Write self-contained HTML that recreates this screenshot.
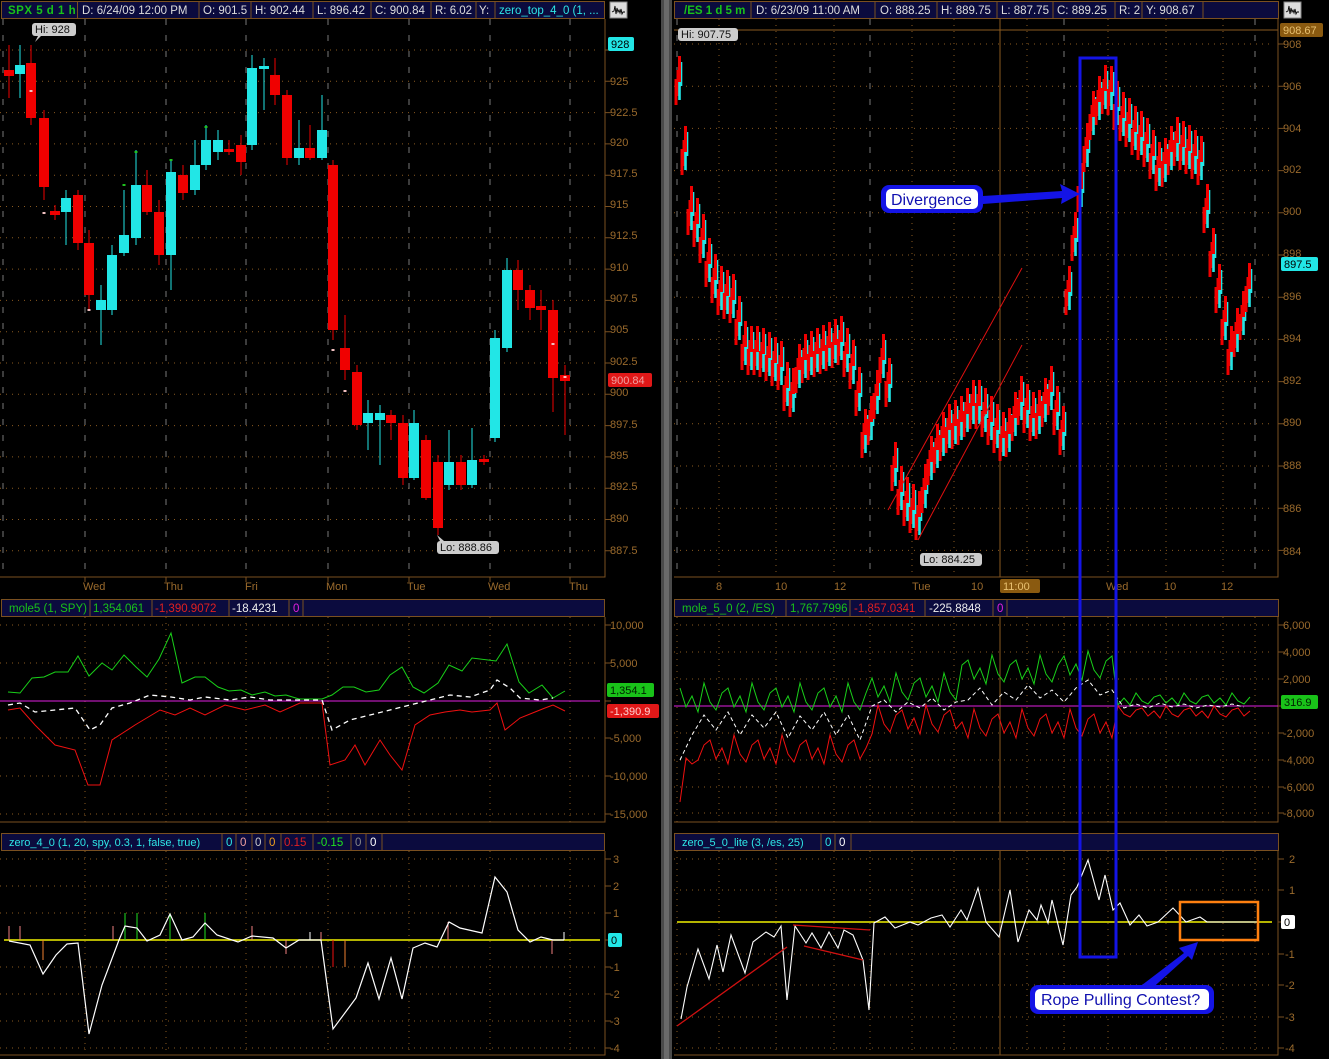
<!DOCTYPE html>
<html><head><meta charset="utf-8">
<style>
html,body{margin:0;padding:0;background:#000;}
svg{display:block;font-family:"Liberation Sans",sans-serif;}
.ax{fill:#9a6a2c;font-size:11px;}
.hd{font-size:11.5px;}
</style></head><body>
<svg width="1329" height="1059" viewBox="0 0 1329 1059" xmlns="http://www.w3.org/2000/svg" xmlns:xlink="http://www.w3.org/1999/xlink">
<rect width="1329" height="1059" fill="#000"/>
<rect x="661" y="0" width="11" height="1059" fill="#4a4a4a"/>
<rect x="664" y="0" width="5" height="1059" fill="#6a6a6a"/>

<!-- GRIDS -->
<g fill="none">
<path stroke="#8a5a20" stroke-dasharray="1,5" d="M0 50H598M0 81.3H598M0 112.6H598M0 143.9H598M0 175.2H598M0 206.5H598M0 237.8H598M0 269.1H598M0 300.4H598M0 331.7H598M0 363H598M0 394.3H598M0 425.6H598M0 456.9H598M0 488.2H598M0 519.5H598M0 550.8H598"/>
<path stroke="#777" stroke-dasharray="6,10" d="M3 19V577M85 19V577M166 19V577M246 19V577M328 19V577M409 19V577M490 19V577M570 19V577"/>
<path stroke="#7a5020" d="M0 577H605V19M85 577v5M166 577v5M246 577v5M328 577v5M409 577v5M490 577v5M570 577v5"/>
<path stroke="#7a5020" d="M605 50h6M605 81.3h6M605 112.6h6M605 143.9h6M605 175.2h6M605 206.5h6M605 237.8h6M605 269.1h6M605 300.4h6M605 331.7h6M605 363h6M605 394.3h6M605 425.6h6M605 456.9h6M605 488.2h6M605 519.5h6M605 550.8h6"/>
<path stroke="#8a5a20" stroke-dasharray="1,5" d="M0 625H598M0 663H598M0 738H598M0 776H598M0 814H598M85 617V822M166 617V822M246 617V822M328 617V822M409 617V822M490 617V822M570 617V822"/>
<path stroke="#7a5020" d="M0 822H605V617M605 625h6M605 663h6M605 701h6M605 738h6M605 776h6M605 814h6"/>
<path stroke="#8a5a20" stroke-dasharray="1,5" d="M0 859H598M0 886H598M0 913H598M0 967H598M0 994H598M0 1021H598M0 1048H598M85 851V1055M166 851V1055M246 851V1055M328 851V1055M409 851V1055M490 851V1055M570 851V1055"/>
<path stroke="#7a5020" d="M0 1055H605V851M605 859h6M605 886h6M605 913h6M605 940h6M605 967h6M605 994h6M605 1021h6M605 1048h6"/>
<path stroke="#8a5a20" stroke-dasharray="1,5" d="M674 44H1272M674 86.2H1272M674 128.4H1272M674 170.6H1272M674 212.8H1272M674 255H1272M674 297.2H1272M674 339.4H1272M674 381.6H1272M674 423.8H1272M674 466H1272M674 508.2H1272M674 550.4H1272M719 19V577M776 19V577M834 19V577M912 19V577M954 19V577M1027 19V577M1108 19V577M1166 19V577M1223 19V577"/>
<path stroke="#777" stroke-dasharray="6,10" d="M677 19V577M870 19V577M1064 19V577M1255 19V577"/>
<path stroke="#8a5a20" d="M1000 19V577M674 30H1278"/>
<path stroke="#7a5020" d="M674 577H1278V19M1278 44h6M1278 86.2h6M1278 128.4h6M1278 170.6h6M1278 212.8h6M1278 255h6M1278 297.2h6M1278 339.4h6M1278 381.6h6M1278 423.8h6M1278 466h6M1278 508.2h6M1278 550.4h6"/>
<path stroke="#8a5a20" stroke-dasharray="1,5" d="M674 625H1272M674 652H1272M674 679H1272M674 733H1272M674 760H1272M674 787H1272M674 813H1272M719 617V822M776 617V822M834 617V822M912 617V822M954 617V822M1027 617V822M1108 617V822M1166 617V822M1223 617V822M677 617V822M870 617V822M1064 617V822M1255 617V822"/>
<path stroke="#8a5a20" d="M1000 617V822"/>
<path stroke="#7a5020" d="M674 822H1278V617M1278 625h6M1278 652h6M1278 679h6M1278 706h6M1278 733h6M1278 760h6M1278 787h6M1278 813h6"/>
<path stroke="#8a5a20" stroke-dasharray="1,5" d="M674 859H1272M674 890H1272M674 954H1272M674 985H1272M674 1017H1272M674 1048H1272M719 851V1055M776 851V1055M834 851V1055M912 851V1055M954 851V1055M1027 851V1055M1108 851V1055M1166 851V1055M1223 851V1055M677 851V1055M870 851V1055M1064 851V1055M1255 851V1055"/>
<path stroke="#8a5a20" d="M1000 851V1055"/>
<path stroke="#7a5020" d="M674 1055H1278V851M1278 859h6M1278 890h6M1278 922h6M1278 954h6M1278 985h6M1278 1017h6M1278 1048h6"/>
</g>

<!-- HEADERS -->
<g stroke="#7a5020" stroke-width="1">
<rect x="1.5" y="1.5" width="603" height="17" fill="#0b0b3e"/>
<rect x="1.5" y="599.5" width="603" height="17" fill="#0b0b3e"/>
<rect x="1.5" y="833.5" width="603" height="17" fill="#0b0b3e"/>
<rect x="674.5" y="1.5" width="604" height="17" fill="#0b0b3e"/>
<rect x="674.5" y="599.5" width="604" height="17" fill="#0b0b3e"/>
<rect x="674.5" y="833.5" width="604" height="17" fill="#0b0b3e"/>
<path d="M77.5 2v16M199 2v16M251 2v16M313 2v16M371 2v16M431 2v16M476 2v16M495 2v16"/>
<path d="M751 2v16M875 2v16M937 2v16M997 2v16M1053 2v16M1115 2v16M1142 2v16M1203 2v16"/>
<path d="M90 600v16M152 600v16M229 600v16M289 600v16M303 600v16"/>
<path d="M222 834v16M236 834v16M252 834v16M265 834v16M281 834v16M313 834v16M351 834v16M366 834v16M382 834v16"/>
<path d="M786 600v16M850 600v16M925 600v16M993 600v16M1007 600v16"/>
<path d="M821 834v16M835 834v16M851 834v16"/>
</g>
<g class="hd">
<text x="8" y="14" fill="#19c219" font-weight="bold" letter-spacing="0.5">SPX 5 d 1 h</text>
<text x="82" y="14" fill="#ddd">D: 6/24/09 12:00 PM</text>
<text x="203" y="14" fill="#ddd">O: 901.5</text>
<text x="255" y="14" fill="#ddd">H: 902.44</text>
<text x="317" y="14" fill="#ddd">L: 896.42</text>
<text x="375" y="14" fill="#ddd">C: 900.84</text>
<text x="435" y="14" fill="#ddd">R: 6.02</text>
<text x="479" y="14" fill="#ddd">Y:</text>
<text x="499" y="14" fill="#2ee6e6">zero_top_4_0 (1, ...</text>
<text x="684" y="14" fill="#19c219" font-weight="bold">/ES 1 d 5 m</text>
<text x="756" y="14" fill="#ddd">D: 6/23/09 11:00 AM</text>
<text x="880" y="14" fill="#ddd">O: 888.25</text>
<text x="941" y="14" fill="#ddd">H: 889.75</text>
<text x="1001" y="14" fill="#ddd">L: 887.75</text>
<text x="1057" y="14" fill="#ddd">C: 889.25</text>
<text x="1119" y="14" fill="#ddd">R: 2</text>
<text x="1146" y="14" fill="#ddd">Y: 908.67</text>
<text x="9" y="612" fill="#19c219">mole5 (1, SPY)</text>
<text x="93" y="612" fill="#19c219">1,354.061</text>
<text x="155" y="612" fill="#e02020">-1,390.9072</text>
<text x="232" y="612" fill="#eee">-18.4231</text>
<text x="293" y="612" fill="#e020e0">0</text>
<text x="682" y="612" fill="#19c219">mole_5_0 (2, /ES)</text>
<text x="790" y="612" fill="#19c219">1,767.7996</text>
<text x="854" y="612" fill="#e02020">-1,857.0341</text>
<text x="929" y="612" fill="#eee">-225.8848</text>
<text x="997" y="612" fill="#e020e0">0</text>
<text x="9" y="846" fill="#2ee6e6" font-size="11">zero_4_0 (1, 20, spy, 0.3, 1, false, true)</text>
<text x="226" y="846" fill="#2ee6e6">0</text>
<text x="240" y="846" fill="#f0a0a0">0</text>
<text x="255" y="846" fill="#ccc">0</text>
<text x="269" y="846" fill="#f0a020">0</text>
<text x="284" y="846" fill="#e02020">0.15</text>
<text x="317" y="846" fill="#20e020">-0.15</text>
<text x="355" y="846" fill="#888">0</text>
<text x="370" y="846" fill="#fff">0</text>
<text x="682" y="846" fill="#2ee6e6" font-size="11">zero_5_0_lite (3, /es, 25)</text>
<text x="825" y="846" fill="#2ee6e6">0</text>
<text x="839" y="846" fill="#fff">0</text>
</g>

<g>
<rect x="610" y="2" width="17" height="16" fill="#ddd" stroke="#888"/>
<path d="M612 12 l2 -1 1 -5 1 8 1 -6 1 4 1 -2 1 3 1 -4 1 5 1 -2 2 0" stroke="#000" fill="none" stroke-width="0.9"/>
<rect x="1284" y="2" width="17" height="16" fill="#ddd" stroke="#888"/>
<path d="M1286 12 l2 -1 1 -5 1 8 1 -6 1 4 1 -2 1 3 1 -4 1 5 1 -2 2 0" stroke="#000" fill="none" stroke-width="0.9"/>
</g>

<g class="ax">
<text x="610" y="85">925</text><text x="610" y="116">922.5</text><text x="610" y="146">920</text>
<text x="610" y="177">917.5</text><text x="610" y="208">915</text><text x="610" y="239">912.5</text>
<text x="610" y="271">910</text><text x="610" y="302">907.5</text><text x="610" y="333">905</text>
<text x="610" y="365">902.5</text><text x="610" y="396">900</text><text x="610" y="428">897.5</text>
<text x="610" y="459">895</text><text x="610" y="490">892.5</text><text x="610" y="522">890</text>
<text x="610" y="554">887.5</text>
<text x="83" y="590">Wed</text><text x="164" y="590">Thu</text><text x="245" y="590">Fri</text>
<text x="326" y="590">Mon</text><text x="407" y="590">Tue</text><text x="488" y="590">Wed</text><text x="569" y="590">Thu</text>
<text x="610" y="629">10,000</text><text x="610" y="667">5,000</text><text x="610" y="742">-5,000</text>
<text x="610" y="780">-10,000</text><text x="610" y="818">-15,000</text>
<text x="613" y="863">3</text><text x="613" y="890">2</text><text x="613" y="917">1</text>
<text x="610" y="971">-1</text><text x="610" y="998">-2</text><text x="610" y="1025">-3</text><text x="610" y="1052">-4</text>
<text x="1283" y="48">908</text><text x="1283" y="90">906</text><text x="1283" y="132">904</text>
<text x="1283" y="173">902</text><text x="1283" y="215">900</text><text x="1283" y="257">898</text>
<text x="1283" y="300">896</text><text x="1283" y="342">894</text><text x="1283" y="384">892</text>
<text x="1283" y="426">890</text><text x="1283" y="469">888</text><text x="1283" y="512">886</text>
<text x="1283" y="555">884</text>
<text x="716" y="590">8</text><text x="775" y="590">10</text><text x="834" y="590">12</text>
<text x="912" y="590">Tue</text><text x="971" y="590">10</text>
<text x="1106" y="590">Wed</text><text x="1164" y="590">10</text><text x="1221" y="590">12</text>
<text x="1283" y="629">6,000</text><text x="1283" y="656">4,000</text><text x="1283" y="683">2,000</text>
<text x="1283" y="737">-2,000</text><text x="1283" y="764">-4,000</text><text x="1283" y="791">-6,000</text><text x="1283" y="817">-8,000</text>
<text x="1289" y="863">2</text><text x="1289" y="894">1</text>
<text x="1285" y="958">-1</text><text x="1285" y="989">-2</text><text x="1285" y="1021">-3</text><text x="1285" y="1052">-4</text>
</g>
<rect x="1000" y="579" width="40" height="14" rx="2" fill="#8a5a10"/>
<text x="1003" y="590" fill="#e8c070" font-size="11">11:00</text>

<!-- LEFT CANDLES -->
<g fill="none">
<path stroke="#22e6e6" stroke-width="1" d="M20 45V98M66 190V245M101 285V345M112 245V315M124 190V256M136 150V245M171 160V290M195 140V195M206 125V170M218 130V160M252 55V150M264 58V110M299 120V165M322 95V160M368 400V450M380 405V465M414 410V480M449 430V490M472 428V488M495 330V442M507 258V352"/>
<path stroke="#22e6e6" stroke-width="10" d="M20 65V74M66 198V212M101 300V310M112 255V310M124 235V253M136 185V238M171 172V255M195 165V190M206 140V165M218 140V152M252 68V145M264 66V69M299 148V158M322 130V158M368 413V423M380 413V420M414 423V478M449 462V485M472 460V485M495 338V438M507 270V348"/>
<path stroke="#f00000" stroke-width="1" d="M9 45V98M31 45V125M44 110V200M55 205V220M78 190V250M89 230V310M147 170V215M159 200V265M183 165V200M229 140V155M241 135V175M275 58V105M287 90V165M310 125V160M333 160V340M345 315V380M357 365V430M391 410V440M403 415V485M426 435V500M438 455V535M461 455V490M484 455V465M518 260V310M530 285V320M541 290V330M553 300V412M565 365V435"/>
<path stroke="#f00000" stroke-width="10" d="M9 70V76M31 63V118M44 118V187M55 211V215M78 195V243M89 243V295M147 185V212M159 212V255M183 175V193M229 149V152M241 145V162M275 75V95M287 95V158M310 148V158M333 165V330M345 348V370M357 372V425M391 415V423M403 423V478M426 440V498M438 462V528M461 462V485M484 459V462M518 270V290M530 290V308M541 306V310M553 310V378M565 375V381"/>
<path stroke="#20c020" stroke-width="3" d="M124 184v2M136 151v2M206 126v2M171 159v2"/>
<path stroke="#f0c0c0" stroke-width="3" d="M31 90v2M44 212v2M89 309v2M333 349v2M345 390v2M553 343v2M565 376v2"/>
</g>

<!-- RIGHT CANDLES -->
<g fill="none">
<path id="rc" stroke="#f00000" stroke-width="3" d="M678 70v26M684 140v26M690 200v26M696 212v26M702 228v26M708 252v26M714 268v26M720 280v26M726 284v26M732 288v26M738 310v26M744 335v26M750 340v26M756 340v26M762 342v26M768 346v26M774 351v26M780 355v26M786 376v26M792 382v26M798 358v26M804 348v26M810 345v26M816 342v26M822 339v26M828 336v26M834 333v26M840 330v26M846 342v26M852 354v26M858 381v26M864 423v26M870 410v26M876 384v26M882 348v26M888 372v26M894 456v26M900 480v26M906 491v26M912 498v26M918 505v26M924 478v26M930 450v26M936 438v26M942 426v26M948 418v26M954 414v26M960 410v26M966 402v26M972 394v26M978 394v26M984 402v26M990 410v26M996 418v26M1002 426v26M1008 422v26M1014 406v26M1020 390v26M1026 398v26M1032 406v26M1038 404v26M1044 392v26M1050 380v26M1056 400v26M1062 420v26M1068 280v26M1074 226v26M1080 177v26M1086 137v26M1092 105v26M1098 90v26M1104 79v26M1110 80v26M1116 95v26M1122 106v26M1128 112v26M1134 120v26M1140 125v26M1146 132v26M1152 144v26M1158 156v26M1164 152v26M1170 140v26M1176 131v26M1182 135v26M1188 139v26M1194 144v26M1200 150v26M1206 198v26M1212 242v26M1218 278v26M1224 310v26M1230 340v26M1236 322v26M1242 305v26M1248 277v26"/>
<path id="cc" stroke="#22e6e6" stroke-width="2.6" transform="translate(3,-8)" d="M678 70v24M684 140v24M690 200v24M696 212v24M702 228v24M708 252v24M714 268v24M720 280v24M726 284v24M732 288v24M738 310v24M744 335v24M750 340v24M756 340v24M762 342v24M768 346v24M774 351v24M780 355v24M786 376v24M792 382v24M798 358v24M804 348v24M810 345v24M816 342v24M822 339v24M828 336v24M834 333v24M840 330v24M846 342v24M852 354v24M858 381v24M864 423v24M870 410v24M876 384v24M882 348v24M888 372v24M894 456v24M900 480v24M906 491v24M912 498v24M918 505v24M924 478v24M930 450v24M936 438v24M942 426v24M948 418v24M954 414v24M960 410v24M966 402v24M972 394v24M978 394v24M984 402v24M990 410v24M996 418v24M1002 426v24M1008 422v24M1014 406v24M1020 390v24M1026 398v24M1032 406v24M1038 404v24M1044 392v24M1050 380v24M1056 400v24M1062 420v24M1068 280v24M1074 226v24M1080 177v24M1086 137v24M1092 105v24M1098 90v24M1104 79v24M1110 80v24M1116 95v24M1122 106v24M1128 112v24M1134 120v24M1140 125v24M1146 132v24M1152 144v24M1158 156v24M1164 152v24M1170 140v24M1176 131v24M1182 135v24M1188 139v24M1194 144v24M1200 150v24M1206 198v24M1212 242v24M1218 278v24M1224 310v24M1230 340v24M1236 322v24M1242 305v24M1248 277v24"/>
<use xlink:href="#rc" href="#rc" transform="translate(-2,9)"/>
<use xlink:href="#cc" href="#cc" transform="translate(-1.5,14)"/>
<use xlink:href="#rc" href="#rc" transform="translate(1.5,-14)"/>
<path stroke="#e01010" stroke-width="1" d="M888 510L1022 268M918 540L1022 345"/>
</g>

<!-- LEFT MOLE -->
<g fill="none" stroke-width="1">
<line x1="0" x2="600" y1="701" y2="701" stroke="#e020e0"/>
<polyline stroke="#19d019" points="8,692 20,693 32,678 44,677 55,672 68,672 78,656 89,676 102,663 112,670 124,655 136,667 147,677 159,659 171,633 182,683 195,677 205,677 218,687 229,691 241,690 252,695 265,692 275,696 286,695 299,699 322,699 332,695 343,687 354,687 366,692 379,690 390,675 402,667 413,687 424,693 438,683 449,665 462,671 472,658 496,661 507,644 519,682 529,693 542,685 553,698 565,691"/>
<polyline stroke="#f01010" points="8,710 20,708 35,725 55,745 75,750 88,785 100,785 112,740 135,725 160,710 175,715 190,708 205,715 225,705 245,710 265,705 280,712 300,703 322,703 330,765 345,760 355,745 365,765 380,740 390,755 402,770 415,725 430,715 445,712 460,710 472,712 490,710 497,703 505,730 520,718 535,712 545,708 553,705 565,711"/>
<polyline stroke="#fff" stroke-width="1.3" stroke-dasharray="5,4" points="8,705 20,703 35,712 55,710 75,708 90,730 100,725 112,708 130,703 150,695 171,697 190,700 205,697 230,700 250,697 270,700 300,700 322,700 332,730 350,720 370,715 390,710 410,705 430,700 450,695 470,697 490,690 497,680 510,688 520,698 540,700 553,698"/>
</g>

<!-- RIGHT MOLE -->
<g fill="none" stroke-width="1">
<line x1="674" x2="1278" y1="706" y2="706" stroke="#e020e0"/>
<polyline stroke="#19d019" points="680,688 686,707 692,696 698,712 704,683 710,702 716,710 722,693 728,688 734,707 740,696 746,712 752,683 758,702 764,710 770,693 776,688 782,707 788,696 794,712 800,683 806,702 812,710 818,693 824,688 830,707 836,696 842,712 848,683 854,702 860,710 866,693 872,678 878,697 884,686 890,702 896,673 902,692 908,700 914,683 920,678 926,697 932,686 938,702 944,673 950,692 956,700 962,665 968,660 974,679 980,668 986,684 992,655 998,674 1004,682 1010,665 1016,660 1022,679 1028,668 1034,684 1040,655 1046,674 1052,682 1058,665 1064,656 1070,675 1076,664 1082,680 1088,651 1094,670 1100,678 1106,661 1112,656 1118,705 1124,698 1130,705 1136,693 1142,701 1148,704 1154,697 1160,695 1166,703 1172,698 1178,705 1184,693 1190,701 1196,704 1202,697 1208,695 1214,703 1220,698 1226,705 1232,693 1238,701 1244,704 1250,697"/>
<polyline stroke="#f01010" points="680,802 686,758 692,764 698,760 704,745 710,740 716,759 722,748 728,764 734,735 740,754 746,762 752,745 758,740 764,759 770,748 776,764 782,735 788,754 794,762 800,745 806,740 812,759 818,748 824,764 830,735 836,754 842,762 848,745 854,740 860,759 866,748 872,734 878,705 884,724 890,732 896,715 902,710 908,729 914,718 920,734 926,705 932,724 938,732 944,715 950,710 956,729 962,722 968,738 974,709 980,728 986,736 992,719 998,714 1004,733 1010,722 1016,738 1022,709 1028,728 1034,736 1040,719 1046,714 1052,733 1058,722 1064,738 1070,709 1076,728 1082,736 1088,719 1094,714 1100,733 1106,722 1112,738 1118,706 1124,714 1130,717 1136,710 1142,708 1148,716 1154,711 1160,718 1166,706 1172,714 1178,717 1184,710 1190,708 1196,716 1202,711 1208,718 1214,706 1220,714 1226,717 1232,710 1238,708 1244,716 1250,711"/>
<polyline stroke="#fff" stroke-dasharray="4,3" points="680,760 692,735 704,715 716,730 728,712 740,735 752,715 764,728 776,712 788,738 800,716 812,730 824,712 836,735 848,715 860,740 872,706 884,700 896,712 908,702 920,708 932,698 944,710 956,702 968,700 980,688 992,705 1004,692 1016,700 1028,685 1040,698 1052,690 1064,702 1076,688 1088,680 1100,695 1112,690 1124,708 1136,704 1148,708 1160,703 1172,707 1184,704 1196,708 1208,705 1220,707 1232,704 1244,707"/>
</g>

<!-- LEFT ZERO -->
<g fill="none">
<line x1="4" x2="600" y1="940" y2="940" stroke="#f0f000" stroke-width="1.5"/>
<path stroke="#f08080" d="M9 940V926M20 940V926M113 940V926M252 940V926M286 940V954M321 940V932M448 940V922M552 940V954"/>
<path stroke="#f08030" d="M43 940V960M345 940V967"/>
<path stroke="#20e020" d="M125 940V913M137 940V913M170 940V913M205 940V913"/>
<path stroke="#f01010" d="M333 940V967"/>
<path stroke="#fff" d="M310 940V932M564 940V932"/>
<polyline stroke="#fff" stroke-width="1.2" points="9,941 30,945 43,974 56,955 67,944 78,943 89,1034 102,985 119,940 125,926 137,928 147,941 160,935 170,914 182,940 193,937 205,923 217,935 238,942 252,936 273,938 286,948 299,940 321,940 333,1029 356,998 368,963 379,999 391,958 402,999 413,948 425,943 437,947 449,922 460,928 482,933 495,877 507,892 518,930 530,942 541,937 553,940 564,940"/>
</g>

<!-- RIGHT ZERO -->
<g fill="none">
<line x1="677" x2="1272" y1="922" y2="922" stroke="#f0f000" stroke-width="1.5"/>
<polyline stroke="#fff" stroke-width="1.1" points="681,1019 687,987 698,949 709,979 717,945 723,972 731,935 745,973 753,942 766,932 774,937 781,926 787,1000 795,926 806,943 812,933 821,948 829,932 838,948 844,930 853,935 863,960 869,1010 874,923 885,917 895,928 910,922 918,925 931,918 942,915 950,927 961,910 967,920 978,888 986,922 999,937 1010,890 1018,942 1029,910 1037,920 1041,905 1048,923 1052,900 1063,945 1071,895 1077,887 1088,860 1099,900 1105,875 1113,910 1120,903 1130,925 1139,915 1147,926 1158,922 1173,908 1186,922 1200,917 1207,922 1258,922"/>
<path stroke="#d01010" stroke-width="1.3" d="M677 1026L787 947M793 925L870 930M804 946L863 960"/>
</g>

<!-- labels -->
<g font-size="11">
<rect x="32" y="23" width="44" height="13" rx="3" fill="#ccc"/><path d="M38 36 l-3 6 6 -6z" fill="#ccc"/>
<text x="35" y="33" fill="#111">Hi: 928</text>
<rect x="437" y="541" width="62" height="13" rx="3" fill="#ccc"/><path d="M440 541 l-3 -6 7 6z" fill="#ccc"/>
<text x="440" y="551" fill="#111">Lo: 888.86</text>
<rect x="678" y="28" width="60" height="13" rx="3" fill="#ccc"/>
<text x="681" y="38" fill="#111">Hi: 907.75</text>
<rect x="920" y="553" width="62" height="13" rx="3" fill="#ccc"/>
<text x="923" y="563" fill="#111">Lo: 884.25</text>
<rect x="608" y="37" width="26" height="14" rx="2" fill="#22e6e6"/><text x="611" y="48" fill="#000">928</text>
<rect x="608" y="373" width="44" height="14" rx="2" fill="#e01818"/><text x="611" y="384" fill="#f0a0a0">900.84</text>
<rect x="607" y="683" width="47" height="14" rx="2" fill="#19c219"/><text x="610" y="694" fill="#002000">1,354.1</text>
<rect x="607" y="704" width="52" height="14" rx="2" fill="#e01818"/><text x="610" y="715" fill="#ffd0d0">-1,390.9</text>
<rect x="608" y="933" width="14" height="14" rx="2" fill="#22e6e6"/><text x="611" y="944" fill="#000">0</text>
<rect x="1280" y="23" width="43" height="14" rx="2" fill="#8a5a10"/><text x="1283" y="34" fill="#e8c070">908.67</text>
<rect x="1281" y="257" width="37" height="14" rx="2" fill="#22e6e6"/><text x="1284" y="268" fill="#000">897.5</text>
<rect x="1281" y="695" width="37" height="14" rx="2" fill="#19c219"/><text x="1284" y="706" fill="#002000">316.9</text>
<rect x="1281" y="915" width="14" height="14" rx="2" fill="#fff"/><text x="1284" y="926" fill="#000">0</text>
</g>

<!-- annotations -->
<rect x="1080" y="58" width="36" height="899" fill="none" stroke="#1414e6" stroke-width="3"/>
<rect x="1180" y="902" width="78" height="38" fill="none" stroke="#ff8010" stroke-width="2.5"/>
<path d="M983 196 L1062 191 L1060 184 L1080 194 L1061 204 L1062 198 L983 204z" fill="#1414e6"/>
<rect x="881" y="185" width="102" height="28" rx="8" fill="#1414e6"/>
<rect x="886" y="189" width="92" height="20" rx="5" fill="#fff"/>
<text x="891" y="205" fill="#1010b0" font-size="16">Divergence</text>
<path d="M1138 988 L1184 953 L1179 948 L1198 942 L1192 960 L1188 956 L1148 992z" fill="#1414e6"/>
<rect x="1030" y="985" width="184" height="29" rx="8" fill="#1414e6"/>
<rect x="1035" y="989" width="174" height="21" rx="5" fill="#fff"/>
<text x="1041" y="1005" fill="#1010b0" font-size="16">Rope Pulling Contest?</text>
</svg>
</body></html>
